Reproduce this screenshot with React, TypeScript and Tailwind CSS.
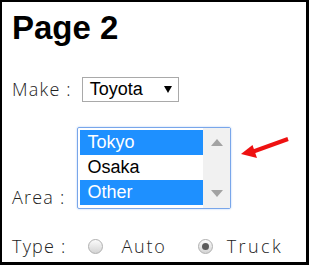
import React from "react";

const areas = [
  { name: "Tokyo", selected: true },
  { name: "Osaka", selected: false },
  { name: "Other", selected: true },
];

function Radio({ checked }: { checked?: boolean }) {
  return (
    <span className="flex h-[15px] w-[15px] items-center justify-center rounded-full border border-[#b0b0b0] bg-gradient-to-b from-[#fbfbfb] to-[#d4d4d4]">
      {checked && <span className="h-[7px] w-[7px] rounded-full bg-[#5a5a5a]" />}
    </span>
  );
}

export default function App() {
  return (
    <div className="relative h-[265px] w-[309px] overflow-hidden border-t-2 border-l-2 border-r-[3px] border-b-[3px] border-black bg-white text-[#222]">
      <div className="flex flex-col pl-[10px] pt-[9px]">
        <h1 className="font-['Liberation_Sans',Arial,sans-serif] text-[33px] font-bold leading-none text-black">
          Page 2
        </h1>

        {/* Make */}
        <div className="mt-[33px] flex h-[25px] items-center">
          <span className="font-['Open_Sans',sans-serif] text-[18px] font-light leading-[25px] tracking-[1.2px]">
            Make :
          </span>
          <div className="ml-[10px] flex h-[25px] w-[97px] items-center border border-[#a9a9a9] bg-white pl-[7px] font-['Liberation_Sans',Arial,sans-serif] text-[18px] text-black">
            <span>Toyota</span>
            <svg className="ml-auto mr-[6px]" width="8" height="7" viewBox="0 0 8 7">
              <path d="M0 0 L8 0 L4 7 Z" fill="#000" />
            </svg>
          </div>
        </div>

        {/* Area */}
        <div className="mt-[25px] flex items-end">
          <span className="mb-[2px] font-['Open_Sans',sans-serif] text-[18px] font-light leading-[20px] tracking-[1.2px]">
            Area :
          </span>
          <div className="ml-[12px] flex h-[82px] w-[154px] rounded-[2px] border border-[#79a6ea] shadow-[0_0_2px_#a9c8f5]">
            <div className="flex flex-1 flex-col pl-[2px] pt-[2px] font-['Liberation_Sans',Arial,sans-serif] text-[18px]">
              {areas.map((a) => (
                <div
                  key={a.name}
                  className={
                    a.selected
                      ? "h-[25px] bg-[#1e90ff] pl-[7px] leading-[25px] text-white"
                      : "h-[25px] bg-white pl-[7px] leading-[25px] text-black"
                  }
                >
                  {a.name}
                </div>
              ))}
            </div>
            <div className="flex w-[27px] flex-col items-center justify-between bg-[#f1f1f1] py-[11px]">
              <svg width="12" height="7" viewBox="0 0 12 7">
                <path d="M6 0 L12 7 L0 7 Z" fill="#a3a3a3" />
              </svg>
              <svg width="12" height="7" viewBox="0 0 12 7">
                <path d="M0 0 L12 0 L6 7 Z" fill="#a3a3a3" />
              </svg>
            </div>
          </div>
        </div>

        {/* Type */}
        <div className="mt-[25px] flex h-[25px] items-center font-['Open_Sans',sans-serif] text-[18px] font-light tracking-[1.2px]">
          <span className="leading-[25px]">Type :</span>
          <span className="ml-[22px]">
            <Radio />
          </span>
          <span className="ml-[18px] leading-[25px] tracking-[1.8px]">Auto</span>
          <span className="ml-[31px]">
            <Radio checked />
          </span>
          <span className="ml-[14px] leading-[25px] tracking-[2.4px]">Truck</span>
        </div>
      </div>

      {/* annotation arrow */}
      <svg className="absolute left-[234px] top-[132px]" width="58" height="30" viewBox="0 0 58 30">
        <line x1="52" y1="5" x2="16" y2="18" stroke="#ee1111" strokeWidth="4" />
        <path d="M5 20 L16.5 11 L21 24 Z" fill="#ee1111" />
      </svg>
    </div>
  );
}
